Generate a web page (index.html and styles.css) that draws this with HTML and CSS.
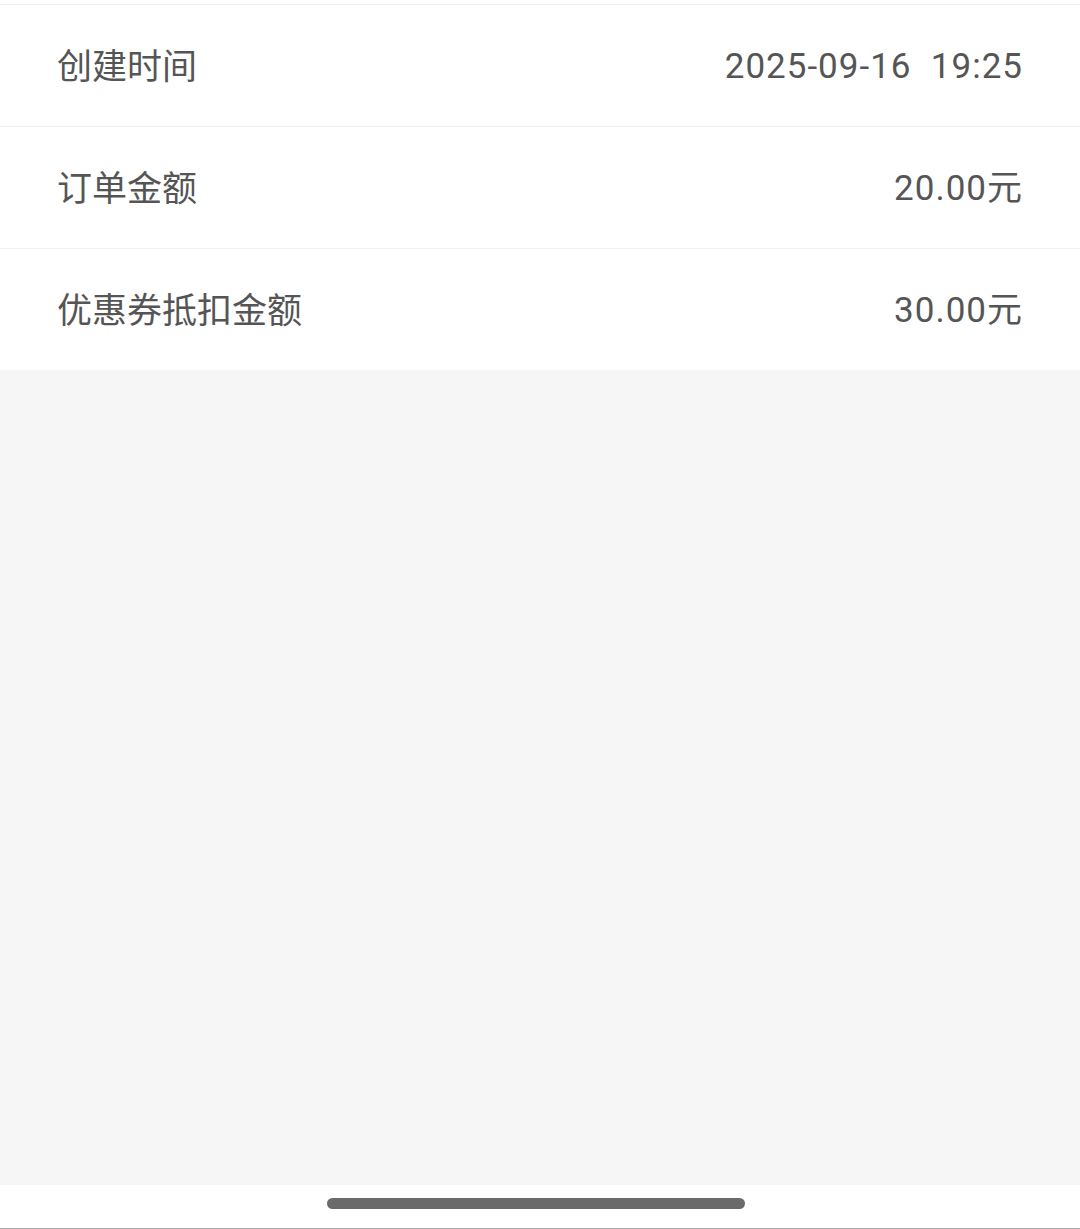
FILE: index.html
```html
<!DOCTYPE html>
<html lang="zh-CN">

<head>
    <meta charset="UTF-8">
    <meta name="viewport" content="width=device-width, initial-scale=1.0">
    <title>订单详情</title>
    <link rel="stylesheet" href="styles.css">
</head>

<body>
    <div class="page">
        <div class="info-list">
            <div class="info-row">
                <span class="label">创建时间</span>
                <span class="value">2025-09-16  19:25</span>
            </div>
            <div class="info-row">
                <span class="label">订单金额</span>
                <span class="value">20.00元</span>
            </div>
            <div class="info-row">
                <span class="label">优惠券抵扣金额</span>
                <span class="value">30.00元</span>
            </div>
        </div>

        <div class="filler"></div>

        <!-- system gesture bar -->
        <div class="home-bar">
            <div class="home-indicator"></div>
        </div>
    </div>
</body>

</html>
```

FILE: styles.css
```css
body {
    margin: 0;
    padding: 0;
    background-color: #f6f6f6;
    font-family: "Noto Sans CJK SC", "Noto Sans", sans-serif;
}

.page {
    display: flex;
    flex-direction: column;
    height: 1229px;
}

.info-list {
    background-color: #fff;
    padding-top: 4px;
}

.info-row {
    display: flex;
    justify-content: space-between;
    align-items: center;
    box-sizing: border-box;
    height: 122px;
    padding: 0 57px 4px;
    border-top: 1px solid #efefef;
    font-size: 35px;
    color: #555;
}

.value {
    white-space: pre;
    font-family: Roboto, "Noto Sans CJK SC", sans-serif;
    letter-spacing: 1px;
    line-height: 50px;
    padding-top: 6px;
}

.filler {
    flex: 1;
    background-color: #f6f6f6;
}

.home-bar {
    height: 44px;
    background-color: #fff;
    border-bottom: 1px solid #aaa;
    display: flex;
    justify-content: center;
    padding: 13px 8px 0 0;
    box-sizing: border-box;
    flex-shrink: 0;
}

.home-indicator {
    width: 418px;
    height: 11px;
    border-radius: 6px;
    background-color: #6a6a6a;
}
```
